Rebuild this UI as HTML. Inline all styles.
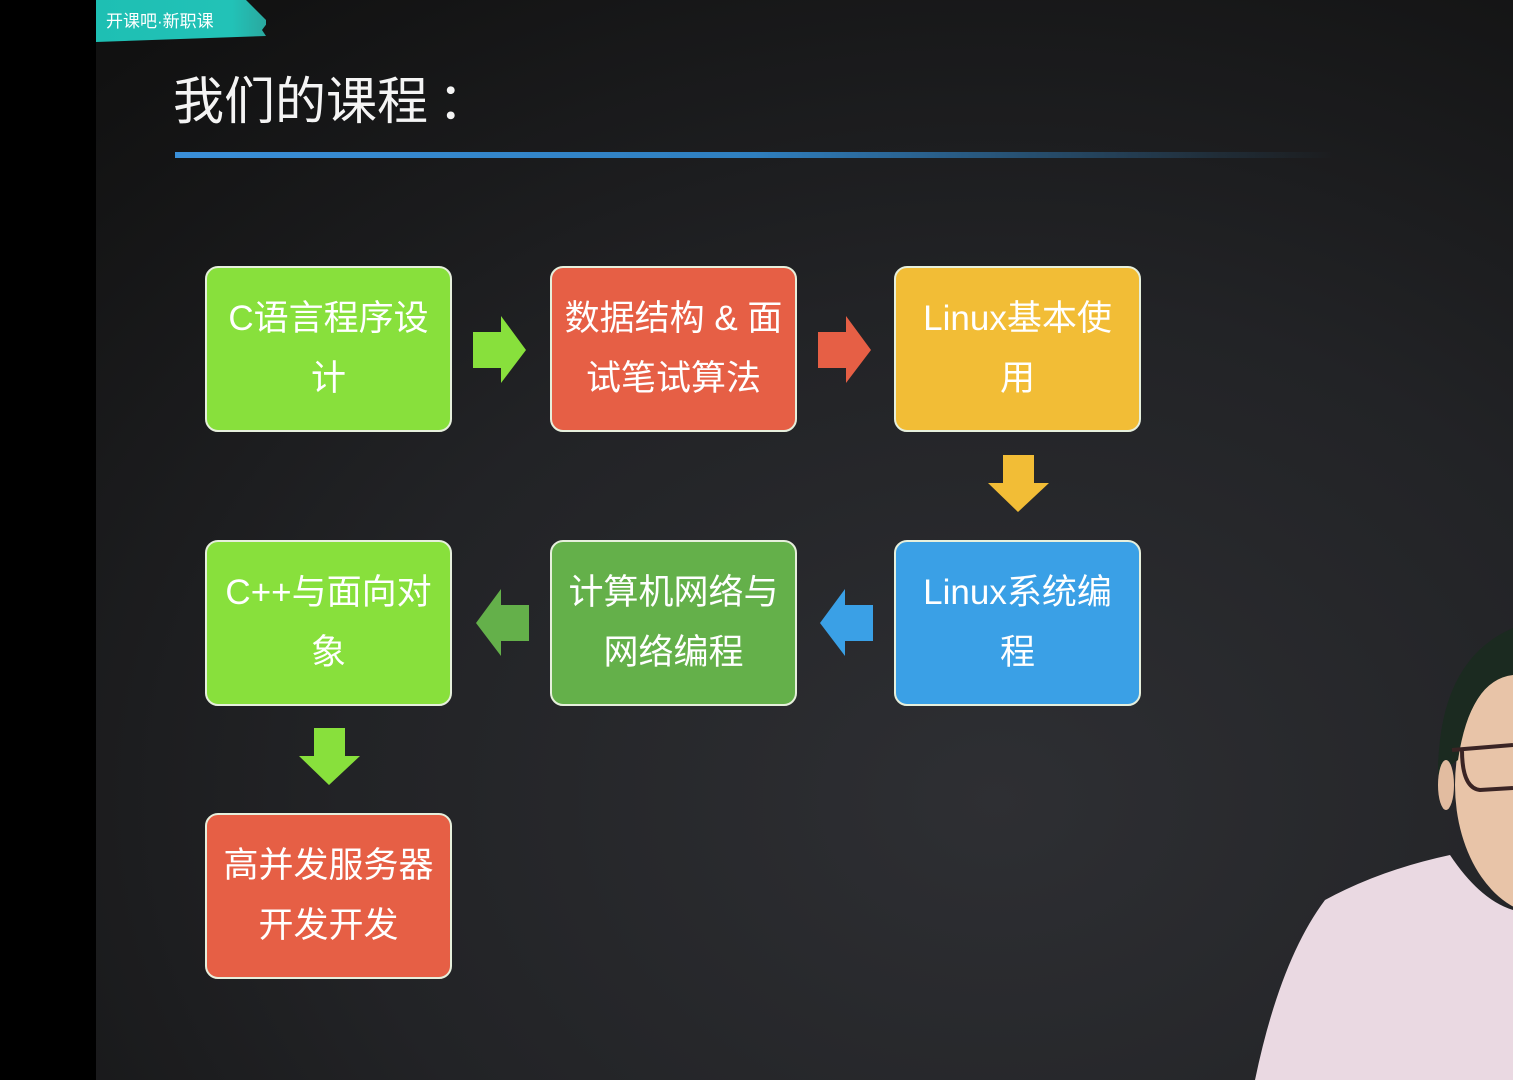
<!DOCTYPE html>
<html><head><meta charset="utf-8">
<style>
html,body{margin:0;padding:0;}
body{width:1513px;height:1080px;overflow:hidden;position:relative;background:#000;font-family:"Liberation Sans","Noto Sans CJK SC",sans-serif;}
#slide{position:absolute;left:96px;top:0;width:1417px;height:1080px;background:radial-gradient(ellipse 1300px 1000px at 900px 800px,#2e2f33 0%,#222326 50%,#111 100%);}
.logo{position:absolute;left:96px;top:0;width:170px;height:42px;background:linear-gradient(90deg,#1ebfb3,#22c2b7 80%,#2aa89f);clip-path:polygon(0 0,150px 0,158px 8px,172px 22px,166px 30px,170px 36px,0 42px);}
.logo span{position:absolute;left:10px;top:7px;color:#fff;font-size:17px;}
h1{position:absolute;left:173px;top:60px;margin:0;color:#f4f4f4;font-weight:normal;font-size:51px;letter-spacing:0px;white-space:nowrap;}
h1 .c{position:absolute;left:265px;top:0;color:#f4f4f4;z-index:2;}
.line{position:absolute;left:175px;top:152px;width:1160px;height:6px;background:linear-gradient(90deg,#3a8fd8 0%,#2f7fbf 50%,rgba(40,80,110,0.3) 90%,rgba(0,0,0,0) 100%);}
.box{position:absolute;width:247px;height:166px;border:2px solid #e6efdc;border-radius:13px;box-sizing:border-box;color:#fff;font-size:35px;line-height:60px;text-align:center;display:flex;align-items:center;justify-content:center;}
.g{background:#88e03c}.r{background:#e65f45}.y{background:#f2bd36}.b{background:#3aa0e6}.m{background:#64b04a}
svg.a{position:absolute;}
</style></head><body>
<div id="slide"></div>
<div class="logo"><span>开课吧·新职课</span></div>
<h1>我们的课程<span class="c">：</span></h1>
<div class="line"></div>

<div class="box g" style="left:205px;top:266px">C语言程序设<br>计</div>
<div class="box r" style="left:550px;top:266px">数据结构 &amp; 面<br>试笔试算法</div>
<div class="box y" style="left:894px;top:266px">Linux基本使<br>用</div>
<div class="box g" style="left:205px;top:540px">C++与面向对<br>象</div>
<div class="box m" style="left:550px;top:540px">计算机网络与<br>网络编程</div>
<div class="box b" style="left:894px;top:540px">Linux系统编<br>程</div>
<div class="box r" style="left:205px;top:813px">高并发服务器<br>开发开发</div>

<svg class="a" style="left:473px;top:316px" width="54" height="68"><polygon points="0,16 28,16 28,0 53,34 28,67 28,52 0,52" fill="#88e03c"/></svg>
<svg class="a" style="left:818px;top:316px" width="54" height="68"><polygon points="0,16 28,16 28,0 53,34 28,67 28,52 0,52" fill="#e65f45"/></svg>
<svg class="a" style="left:988px;top:455px" width="62" height="58"><polygon points="15,0 46,0 46,28 61,28 30,57 0,28 15,28" fill="#f2bd36"/></svg>
<svg class="a" style="left:820px;top:589px" width="54" height="68"><polygon points="53,16 25,16 25,0 0,34 25,67 25,52 53,52" fill="#3aa0e6"/></svg>
<svg class="a" style="left:476px;top:589px" width="54" height="68"><polygon points="53,16 25,16 25,0 0,34 25,67 25,52 53,52" fill="#64b04a"/></svg>
<svg class="a" style="left:299px;top:728px" width="62" height="58"><polygon points="15,0 46,0 46,28 61,28 30,57 0,28 15,28" fill="#88e03c"/></svg>

<svg class="a" style="left:1240px;top:600px" width="273" height="480">
 <path d="M198,170 Q200,70 273,28 L273,120 Z" fill="#1b2a20"/>
 <ellipse cx="305" cy="185" rx="90" ry="130" fill="#e8c4a8"/>
 <path d="M198,175 Q198,60 273,28 L273,75 Q230,80 218,160 Z" fill="#1b2a20"/>
 <ellipse cx="206" cy="185" rx="8" ry="25" fill="#e2bca0"/>
 <path d="M212,150 L273,145 M222,150 Q222,188 240,190 L273,188" fill="none" stroke="#3a2424" stroke-width="4"/>
 <path d="M15,480 Q40,360 85,300 Q140,270 210,255 Q240,300 273,310 L273,480 Z" fill="#ead9e2"/>
</svg>
</body></html>
